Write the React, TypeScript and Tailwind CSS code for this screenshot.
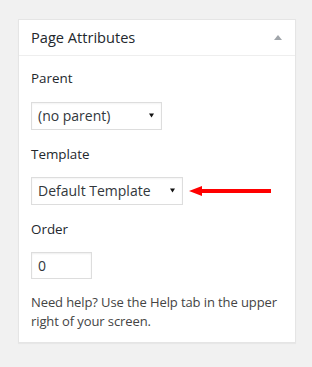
import React from "react";

function Caret() {
  return (
    <svg width="5" height="5" viewBox="0 0 5 5" className="block -mt-[2px]">
      <path d="M0 0.5 L5 0.5 L2.5 4.5 Z" fill="#111" />
    </svg>
  );
}

function FakeSelect({ label, width }: { label: string; width: string }) {
  return (
    <div
      className={`${width} h-[28px] border border-[#dddddd] bg-white flex items-center justify-between pl-[6px] pr-[7px] text-[14px] text-[#32373c] shadow-[inset_0_1px_2px_rgba(0,0,0,0.05)]`}
    >
      <span className="leading-none">{label}</span>
      <Caret />
    </div>
  );
}

export default function App() {
  return (
    <div
      className="w-[312px] h-[367px] bg-[#f1f1f1] pt-[19px] pl-[18px]"
      style={{ fontFamily: '"Open Sans", "Noto Sans", sans-serif' }}
    >
      <div className="w-[278px] bg-white border border-[#e5e5e5] shadow-[0_1px_1px_rgba(0,0,0,0.04)]">
        <div className="h-[36px] border-b border-[#eeeeee] flex items-center justify-between pl-[12px] pr-[13px]">
          <span className="text-[14.6px] font-medium text-[#23282d] leading-none">Page Attributes</span>
          <svg width="8" height="5" viewBox="0 0 8 5" className="block">
            <path d="M0 5 L4 0 L8 5 Z" fill="#a0a5aa" />
          </svg>
        </div>
        <div className="px-[12px] pt-[13px] pb-[12px] flex flex-col">
          <div className="text-[13.4px] font-medium text-[#23282d] leading-[18px]">Parent</div>
          <div className="mt-[15px]">
            <FakeSelect label="(no parent)" width="w-[131px]" />
          </div>
          <div className="mt-[15px] text-[13.4px] font-medium text-[#23282d] leading-[18px]">Template</div>
          <div className="mt-[14px] flex items-center">
            <FakeSelect label="Default Template" width="w-[152px]" />
            <svg width="84" height="10" viewBox="0 0 84 10" className="block ml-[6px]">
              <path d="M0 5 L13 0 L13 3 L82 3 L82 7 L13 7 L13 10 Z" fill="#ff0000" />
            </svg>
          </div>
          <div className="mt-[15px] text-[13.4px] font-medium text-[#23282d] leading-[18px]">Order</div>
          <div className="mt-[14px] w-[61px] h-[27px] border border-[#dddddd] bg-white flex items-center pl-[6px] text-[14px] text-[#32373c] shadow-[inset_0_1px_2px_rgba(0,0,0,0.07)]">
            0
          </div>
          <p className="mt-[14px] text-[13px] tracking-[-0.1px] leading-[18.5px] text-[#444444]">
            Need help? Use the Help tab in the upper right of your screen.
          </p>
        </div>
      </div>
    </div>
  );
}
